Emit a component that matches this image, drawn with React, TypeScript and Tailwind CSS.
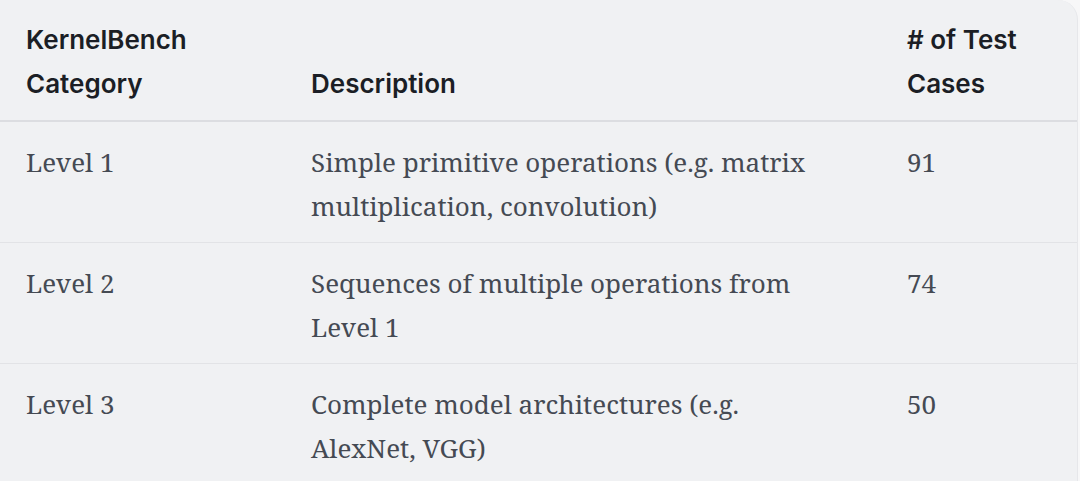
const rows = [
  { level: 'Level 1', desc: 'Simple primitive operations (e.g. matrix multiplication, convolution)', count: '91' },
  { level: 'Level 2', desc: 'Sequences of multiple operations from Level 1', count: '74' },
  { level: 'Level 3', desc: 'Complete model architectures (e.g. AlexNet, VGG)', count: '50' },
]

export default function App() {
  return (
    <div className="w-[1080px] h-[481px] bg-[#f7f7f8] overflow-hidden">
      <div className="w-[1078px] h-[481px] bg-[#f0f1f3] rounded-tr-[20px] border-r border-[#e6e7ea]">
        <table className="w-full table-fixed border-collapse text-left">
          <colgroup>
            <col className="w-[311px]" />
            <col className="w-[596px]" />
            <col />
          </colgroup>
          <thead>
            <tr className="border-b-2 border-[#dcdde1]">
              <th className="pl-[26px] pt-[18px] pb-[14px] align-bottom font-semibold text-[26px] leading-[44px] text-[#1b1e25] font-['Inter',sans-serif]">
                KernelBench
                <br />
                Category
              </th>
              <th className="pt-[18px] pb-[14px] align-bottom font-semibold text-[26px] leading-[44px] text-[#1b1e25] font-['Inter',sans-serif]">
                Description
              </th>
              <th className="pt-[18px] pb-[14px] align-bottom font-semibold text-[26px] leading-[44px] text-[#1b1e25] font-['Inter',sans-serif]">
                # of Test
                <br />
                Cases
              </th>
            </tr>
          </thead>
          <tbody className="font-['Noto_Serif','DejaVu_Serif',serif] text-[26px] leading-[44px] text-[#454a53]">
            {rows.map((r, i) => (
              <tr key={r.level} className={i < rows.length - 1 ? 'border-b border-[#e2e3e6]' : ''}>
                <td className="pl-[26px] pt-[18px] pb-[14px] align-top">{r.level}</td>
                <td className="pr-[70px] pt-[18px] pb-[14px] align-top">{r.desc}</td>
                <td className="pt-[18px] pb-[14px] align-top">{r.count}</td>
              </tr>
            ))}
          </tbody>
        </table>
      </div>
    </div>
  )
}
